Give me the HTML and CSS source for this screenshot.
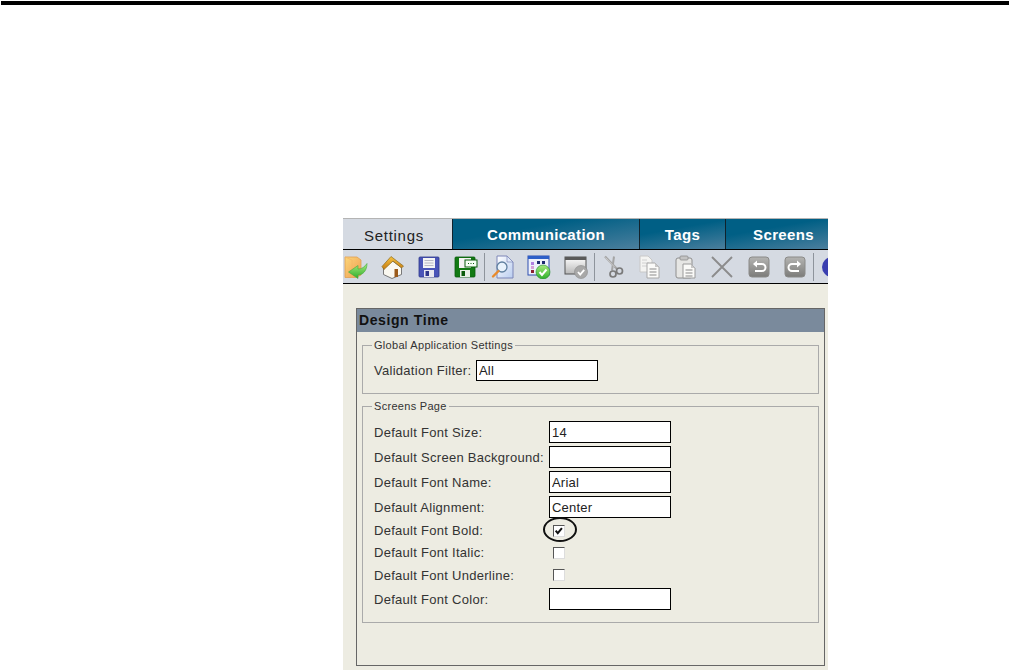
FILE: index.html
```html
<!DOCTYPE html>
<html lang="en">
<head>
  <meta charset="UTF-8">
  <meta name="viewport" content="width=device-width, initial-scale=1.0">
  <title>Design Time Settings</title>
  <link rel="stylesheet" href="styles.css">
</head>
<body>
  <div class="top-rule"></div>

  <svg class="defs" width="0" height="0" aria-hidden="true">
    <defs>
      <linearGradient id="gFolder" x1="0" y1="0" x2="1" y2="1"><stop offset="0" stop-color="#fcd77a"/><stop offset="1" stop-color="#ee9c52"/></linearGradient>
      <linearGradient id="gGreen" x1="0" y1="0" x2="0" y2="1"><stop offset="0" stop-color="#a6ea7c"/><stop offset="1" stop-color="#2fae2c"/></linearGradient>
      <linearGradient id="gRoof" x1="0" y1="0" x2="0" y2="1"><stop offset="0" stop-color="#f8c440"/><stop offset="1" stop-color="#c57a10"/></linearGradient>
      <linearGradient id="gDoc" x1="0" y1="0" x2="1" y2="1"><stop offset="0" stop-color="#ffffff"/><stop offset="1" stop-color="#b9cdf0"/></linearGradient>
      <linearGradient id="gBtn" x1="0" y1="0" x2="0" y2="1"><stop offset="0" stop-color="#b4b4b2"/><stop offset="1" stop-color="#7c7c7a"/></linearGradient>
      <linearGradient id="gWin" x1="0" y1="0" x2="0" y2="1"><stop offset="0" stop-color="#ffffff"/><stop offset="1" stop-color="#b8b8b8"/></linearGradient>
    </defs>
  </svg>

  <div class="app">
    <nav class="tabs">
      <div class="tab tab-active">Settings</div>
      <div class="tab tab-comm">Communication</div>
      <div class="tab tab-tags">Tags</div>
      <div class="tab tab-screens">Screens</div>
    </nav>

    <div class="toolbar">
      <!-- open -->
      <svg class="tool" viewBox="0 0 24 24">
        <path d="M1 2l12 0 4 3v15l-5 2.500H1z" fill="url(#gFolder)" stroke="#e0a050" stroke-width=".8"/>
        <path d="M1 2l7 3v17.500" fill="none" stroke="#f4b868" stroke-width=".8"/>
        <path d="M23 8.500c0 7-4 11.500-9 11.500v3.500L4.500 17 14 10.500V14c4 0 6.500-2 9-5.500z" fill="url(#gGreen)" stroke="#45a83c" stroke-width=".6"/>
      </svg>
      <!-- home -->
      <svg class="tool" viewBox="0 0 24 24">
        <path d="M2.500 12l9-6 9 6.500v7l-9.500 4-8.500-4z" fill="#faf8f0" stroke="#6b6b6b" stroke-width=".9"/>
        <path d="M1 11.500L10 1.500l12.500 9.500-2 2L12 6 3 14.500z" fill="url(#gRoof)" stroke="#8a6a20" stroke-width=".7"/>
        <rect x="13.500" y="14" width="3.500" height="8" fill="#9a5a1a"/>
      </svg>
      <!-- save -->
      <svg class="tool" viewBox="0 0 24 24">
        <rect x="2" y="2" width="20" height="20" rx="1" fill="#4a55b8" stroke="#2f378c" stroke-width=".8"/>
        <rect x="6" y="3" width="12" height="10" fill="#f4f4f4"/>
        <path d="M7.500 5.500h9M7.500 8h9M7.500 10.500h9" stroke="#a8a8b8" stroke-width=".8"/>
        <rect x="7" y="15" width="10" height="7" fill="#e8e8f0"/>
        <rect x="8.500" y="16" width="3.500" height="5" fill="#2f378c"/>
      </svg>
      <!-- save as -->
      <svg class="tool" viewBox="0 0 24 24">
        <rect x="1" y="2" width="20" height="20" rx="1" fill="#127a14" stroke="#0a5c0c" stroke-width=".8"/>
        <rect x="5" y="3" width="12" height="10" fill="#f4f4f4"/>
        <rect x="6" y="15" width="10" height="7" fill="#e8f0e8"/>
        <rect x="7.500" y="16" width="3.500" height="5" fill="#0a5c0c"/>
        <rect x="11" y="5" width="12" height="7" fill="#f4fff4" stroke="#0a5c0c"/>
        <path d="M14 8.500h1M16.500 8.500h1M19 8.500h1" stroke="#0a5c0c"/>
      </svg>
      <span class="sep"></span>
      <!-- preview -->
      <svg class="tool" viewBox="0 0 24 24">
        <path d="M6 1h10l6 6v16H6z" fill="url(#gDoc)" stroke="#7d86b8"/>
        <path d="M16 1v6h6z" fill="#dfe8f8" stroke="#7d86b8" stroke-width=".7"/>
        <circle cx="11" cy="12" r="5" fill="#e8f2fc" stroke="#5f7f9f" stroke-width="1.300"/>
        <path d="M7.500 16L2 21.500" stroke="#e98a2a" stroke-width="2.400" stroke-linecap="round"/>
      </svg>
      <!-- validate -->
      <svg class="tool" viewBox="0 0 24 24">
        <rect x="1" y="1" width="21" height="19" fill="#eef1fb" stroke="#2e4fb0"/>
        <rect x="1" y="1" width="21" height="3" fill="#2e5fc8"/>
        <rect x="4" y="7" width="3" height="3" fill="#b080e0"/>
        <rect x="10" y="6" width="3" height="3" fill="#1c2a70"/>
        <rect x="15" y="6" width="3" height="3" fill="#1c2a70"/>
        <rect x="4" y="11" width="3" height="3" fill="#d8a0d8"/>
        <rect x="4" y="15" width="3" height="3" fill="#8a2030"/>
        <circle cx="16" cy="17" r="7" fill="url(#gGreen)" stroke="#1e8c2a" stroke-width=".6"/>
        <path d="M12.500 17l2.500 3 4.500-5.500" fill="none" stroke="#fff" stroke-width="2"/>
      </svg>
      <!-- window check, disabled -->
      <svg class="tool" viewBox="0 0 24 24">
        <rect x="1" y="2" width="21" height="17" fill="url(#gWin)" stroke="#555"/>
        <rect x="1" y="2" width="21" height="3" fill="#5a5a5a"/>
        <circle cx="17" cy="17" r="6.500" fill="#a8a8a8" stroke="#8a8a8a" stroke-width=".6"/>
        <path d="M14 17l2.200 2.600 4-4.800" fill="none" stroke="#fff" stroke-width="1.800"/>
      </svg>
      <span class="sep"></span>
      <!-- cut -->
      <svg class="tool" viewBox="0 0 24 24">
        <path d="M4 1.500l12 12.500" stroke="#a4a4a4" stroke-width="2.200" fill="none"/>
        <path d="M13 1.500l-2 14" stroke="#a4a4a4" stroke-width="2" fill="none"/>
        <path d="M4.500 2.500l9 9.500" stroke="#e4e4e4" stroke-width=".6" fill="none"/>
        <circle cx="12" cy="19" r="3" fill="none" stroke="#7a7a7a" stroke-width="1.700"/>
        <circle cx="18.500" cy="16" r="3" fill="none" stroke="#7a7a7a" stroke-width="1.700"/>
      </svg>
      <!-- copy -->
      <svg class="tool" viewBox="0 0 24 24">
        <path d="M3 1h8l4 4v12H3z" fill="#f4f4f2" stroke="#c8c8c8"/>
        <path d="M5 5h5M5 8h7M5 11h7" stroke="#d0d0d0"/>
        <path d="M10 8h8l4 4v11H10z" fill="#fafaf8" stroke="#a8a8a8"/>
        <path d="M18 8v4h4z" fill="#c8c8c8"/>
        <path d="M12.500 14h7M12.500 17h7M12.500 20h7" stroke="#8a8a8a"/>
      </svg>
      <!-- paste -->
      <svg class="tool" viewBox="0 0 24 24">
        <rect x="2" y="3" width="16" height="20" rx="2" fill="#e6e6e4" stroke="#8e8e8e"/>
        <rect x="6" y="1" width="8" height="4" rx="1" fill="#c4c4c4" stroke="#8e8e8e" stroke-width=".8"/>
        <path d="M9 9h8l4 4v10H9z" fill="#fafaf8" stroke="#9a9a9a"/>
        <path d="M17 9v4h4z" fill="#c8c8c8"/>
        <path d="M11.500 15h7M11.500 18h7M11.500 21h7" stroke="#8a8a8a"/>
      </svg>
      <!-- delete -->
      <svg class="tool" viewBox="0 0 24 24">
        <path d="M2 2l20 20M22 2L2 22" stroke="#8c8c8c" stroke-width="1.900"/>
      </svg>
      <!-- undo -->
      <svg class="tool" viewBox="0 0 24 24">
        <rect x="2" y="2" width="20" height="20" rx="3" fill="url(#gBtn)" stroke="#8a8a88"/>
        <path d="M8 9h7a3.500 3.500 0 0 1 0 7H8" fill="none" stroke="#fff" stroke-width="2"/>
        <path d="M10 5.500L6 9l4 3.500z" fill="#fff"/>
      </svg>
      <!-- redo -->
      <svg class="tool" viewBox="0 0 24 24">
        <rect x="2" y="2" width="20" height="20" rx="3" fill="url(#gBtn)" stroke="#8a8a88"/>
        <path d="M16 9H9a3.500 3.500 0 0 0 0 7h7" fill="none" stroke="#fff" stroke-width="2"/>
        <path d="M14 5.500L18 9l-4 3.500z" fill="#fff"/>
      </svg>
      <span class="sep"></span>
      <!-- help, cut off by the frame -->
      <svg class="tool" viewBox="0 0 24 24">
        <circle cx="12" cy="12" r="10" fill="#3a3fb0"/>
      </svg>
    </div>

    <div class="content">
      <section class="panel">
        <h2 class="panel-title">Design Time</h2>
        <div class="panel-body">
          <fieldset class="group">
            <legend>Global Application Settings</legend>
            <div class="row row-inline">
              <label for="validationFilter">Validation Filter:</label>
              <input id="validationFilter" class="field field-short" type="text" value="All" readonly>
            </div>
          </fieldset>

          <fieldset class="group">
            <legend>Screens Page</legend>
            <div class="rows">
              <div class="row">
                <label for="fontSize">Default Font Size:</label>
                <input id="fontSize" class="field" type="text" value="14" readonly>
              </div>
              <div class="row">
                <label for="screenBg">Default Screen Background:</label>
                <input id="screenBg" class="field" type="text" value="" readonly>
              </div>
              <div class="row">
                <label for="fontName">Default Font Name:</label>
                <input id="fontName" class="field" type="text" value="Arial" readonly>
              </div>
              <div class="row">
                <label for="alignment">Default Alignment:</label>
                <input id="alignment" class="field" type="text" value="Center" readonly>
              </div>
              <div class="row row-check">
                <label>Default Font Bold:</label>
                <span class="check">
                  <svg viewBox="0 0 12 12" width="10" height="10"><path d="M2 5.500l2.500 3L9.500 2.500" fill="none" stroke="#111" stroke-width="2.400"/></svg>
                  <span class="callout"></span>
                </span>
              </div>
              <div class="row row-check">
                <label>Default Font Italic:</label>
                <span class="check"></span>
              </div>
              <div class="row row-check row-last-check">
                <label>Default Font Underline:</label>
                <span class="check"></span>
              </div>
              <div class="row">
                <label for="fontColor">Default Font Color:</label>
                <input id="fontColor" class="field" type="text" value="" readonly>
              </div>
            </div>
          </fieldset>
        </div>
      </section>
    </div>
  </div>
</body>
</html>
```

FILE: styles.css
```css
html, body {
  height: 670px;
  overflow: hidden;
}
body {
  margin: 0;
  background: white;
  color: #333;
  font-family: "Liberation Sans", Arial, sans-serif;
}
.defs {
  display: block;
  height: 0;
}
.top-rule {
  height: 4px;
  margin: 1px 0 0 1px;
  background: black;
}
.app {
  box-sizing: border-box;
  width: 485px;
  height: 452px;
  margin: 213px 0 0 343px;
  border-top: 1px solid #b4b4b4;
  display: flex;
  flex-direction: column;
  overflow: hidden;
}
.tabs {
  display: flex;
  flex: none;
  height: 30px;
  border-bottom: 1px solid black;
  background: #d5dae2;
}
.tab {
  display: flex;
  align-items: center;
  justify-content: center;
  box-sizing: border-box;
  color: white;
  font-size: 15px;
  font-weight: bold;
  letter-spacing: 0.35px;
  background: linear-gradient(170deg, #005f85 35%, #4c7f9d 100%);
  border-left: 1px solid #10222c;
}
.tab-active {
  width: 109px;
  padding: 2px 7px 0 0;
  color: #222;
  font-size: 15px;
  font-weight: normal;
  letter-spacing: 0.7px;
  background: #d5dae2;
  border-left: none;
}
.tab-comm { width: 187px; }
.tab-tags { width: 86px; }
.tab-screens { width: 103px; padding-left: 13px; }
.toolbar {
  display: flex;
  flex: none;
  align-items: center;
  gap: 12.5px;
  box-sizing: border-box;
  height: 34px;
  padding-left: 1px;
  background: #d5dae2;
  border-bottom: 1px solid black;
}
.tool {
  flex: none;
  width: 24px;
  height: 24px;
}
.sep {
  flex: none;
  width: 1px;
  height: 28px;
  margin: 0 -6.500px;
  background: #8e949c;
}
.content {
  flex: 1;
  padding: 24px 3px 0 13px;
  background: #edece2;
}
.panel {
  box-sizing: border-box;
  height: 358px;
  border: 1px solid #666;
}
.panel-title {
  margin: 0;
  height: 23px;
  padding-left: 2px;
  line-height: 23px;
  background: #7a8a9c;
  color: #111;
  font-size: 14px;
  font-weight: bold;
  letter-spacing: 0.6px;
}
.panel-body {
  padding: 7px 5px 0;
}
.group {
  margin: 0 0 6px;
  padding: 8px 11px 12px;
  border: 1px solid #aaa;
  min-width: 0;
}
.group legend {
  margin-left: -2px;
  padding: 0 2px;
  height: 13px;
  line-height: 13px;
  font-size: 11px;
  letter-spacing: 0.3px;
}
.rows {
  display: flex;
  flex-direction: column;
  gap: 3px;
}
.row {
  display: flex;
  align-items: center;
}
.row label {
  flex: none;
  width: 175px;
  font-size: 13px;
  letter-spacing: 0.28px;
}
.row-inline label {
  width: 102px;
}
.row-check {
  height: 19px;
}
.row-last-check {
  height: 20px;
}
.field {
  box-sizing: border-box;
  width: 122px;
  height: 22px;
  padding: 0 2px;
  border: 1px solid black;
  border-radius: 0;
  outline: none;
  background: white;
  color: #222;
  font: 13px "Liberation Sans", Arial, sans-serif;
  letter-spacing: 0.2px;
}
.field-short {
  height: 21px;
}
.check {
  position: relative;
  display: flex;
  align-items: center;
  justify-content: center;
  box-sizing: border-box;
  width: 12px;
  height: 12px;
  margin-left: 4px;
  border: 1px solid;
  border-color: #555 #ddd #ddd #555;
  background: white;
}
.callout {
  position: absolute;
  left: -11px;
  top: -9px;
  width: 30px;
  height: 21px;
  border: 2px solid #111;
  border-radius: 50%;
}
```
